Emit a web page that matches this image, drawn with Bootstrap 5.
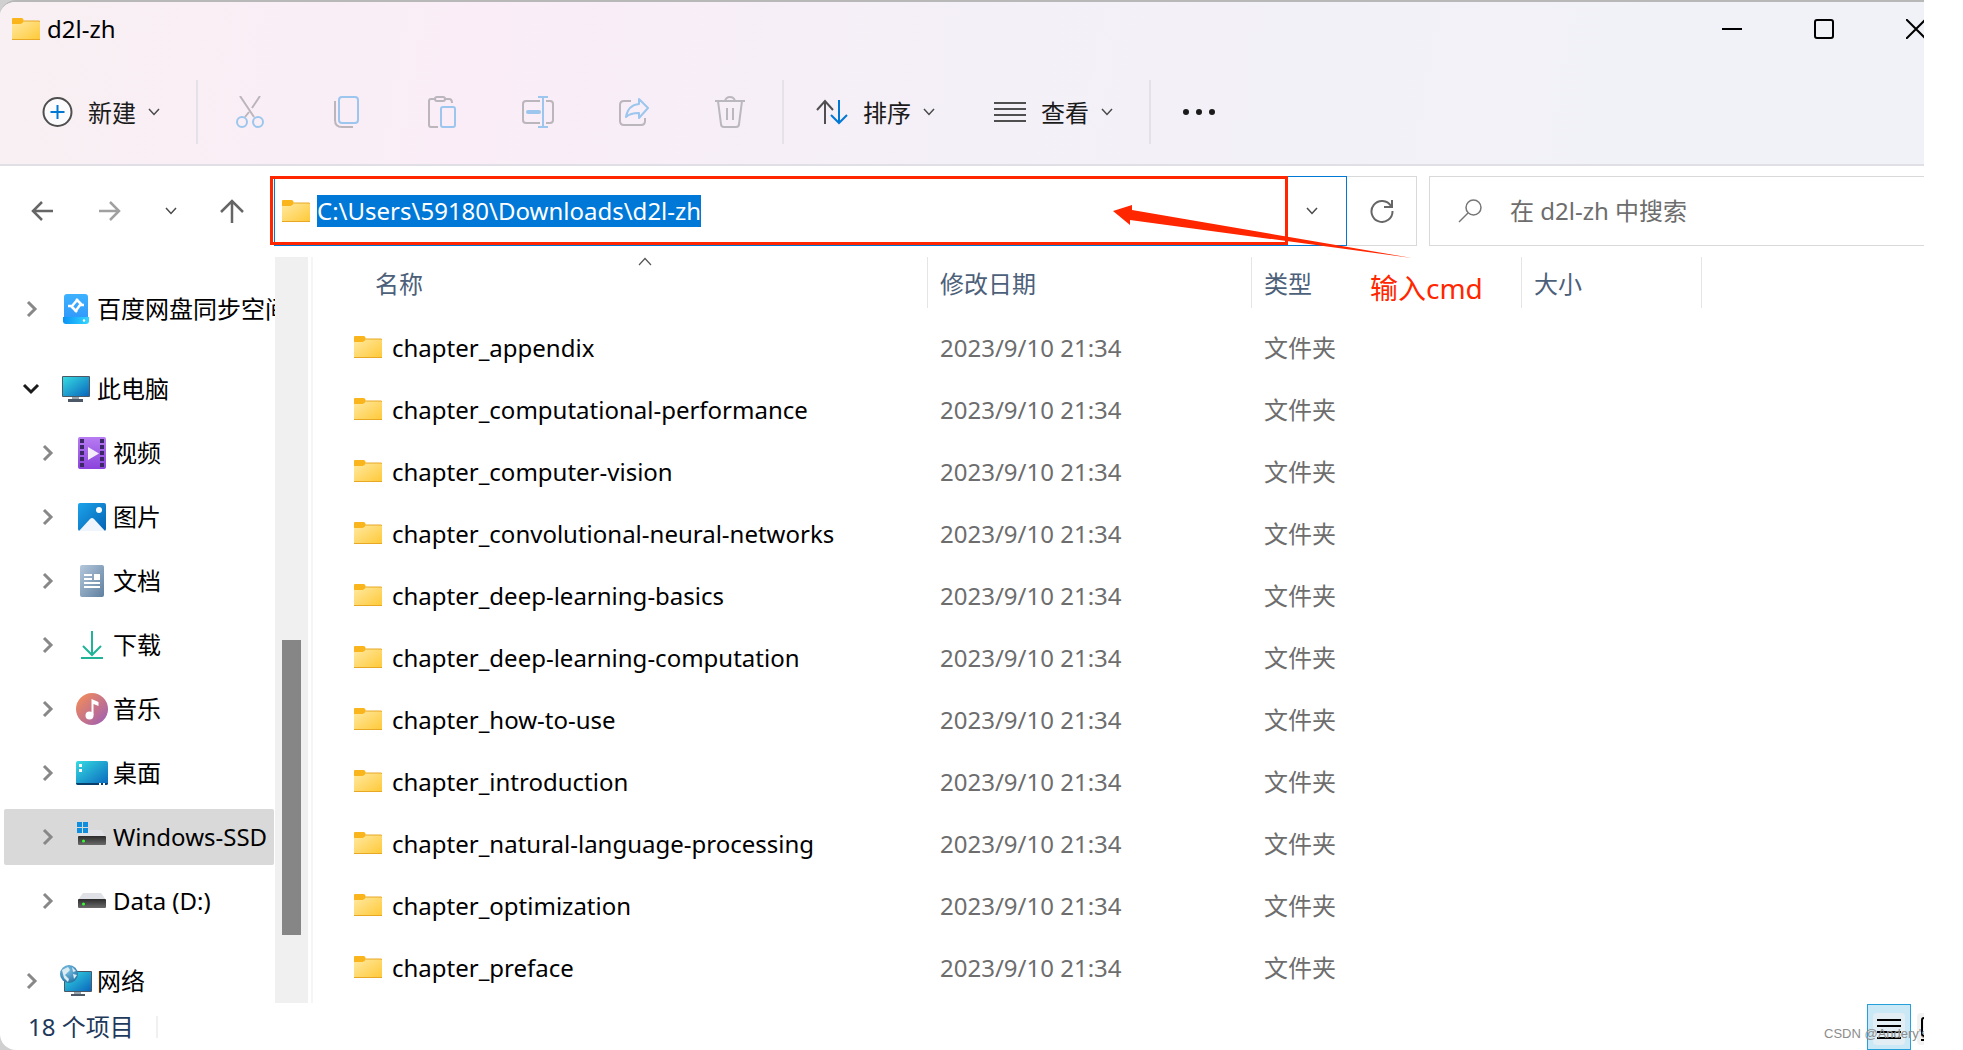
<!DOCTYPE html>
<html lang="zh-CN">
<head>
<meta charset="utf-8">
<meta name="viewport" content="width=device-width, initial-scale=1">
<title>d2l-zh</title>
<link href="https://cdn.jsdelivr.net/npm/bootstrap@5.3.0/dist/css/bootstrap.min.css" rel="stylesheet">
<style>
  body { font-family: "Noto Sans", "Noto Sans CJK SC", sans-serif; font-size: 24px; line-height: 32px; color: #000; background: #fff; padding-right: 39px; }
  .shell { background: #d0d0d0; height: 100vh; }
  .explorer { border-top: 2px solid #b8b8b8; border-radius: 16px 0 0 16px; background: #fff; height: 100%; }
  .chrome-head { background: linear-gradient(100deg, #f8f0f3 0%, #faedf7 25%, #f4f0f7 50%, #f1f2f8 85%); border-bottom: 2px solid #e0dfe5; }
  .titlebar { height: 54px; padding-left: 12px; gap: 7px; }
  .caption-set { margin-right: -38px; }
  .caption-set .btn { width: 92px; }
  .toolbar { height: 108px; padding: 4px 0 0 42px; color: #1b1b1b; }
  .btn { border: 0; border-radius: 0; padding: 0; display: inline-flex; align-items: center; justify-content: center; font-size: 24px; line-height: 32px; color: inherit; }
  .menu-btn { gap: 12px; }
  .menu-btn > span { margin-left: 3px; padding-top: 2px; }
  .tool-btn { width: 96px; height: 64px; }
  .rule-v { width: 2px; height: 64px; background: #e5e1e9; }
  .rule-v.after-menu { margin-left: 36px; }
  .rule-v.before-menu { margin-right: 32px; }
  .view-menu { margin-left: 59px; }
  .navrow { padding-top: 10px; height: 91px; }
  .nav-set { padding: 0 8px; width: 274px; }
  .nav-set .btn { flex: 1 1 0; height: 70px; }
  .nav-set .btn.narrow { flex: 0 0 54px; }
  .address { flex: 1064 1 0; height: 70px; border: 1px solid #0078d4; padding-left: 7px; gap: 7px; }
  .address input, .finder input { border: 0; outline: 0; background: transparent; min-width: 0; padding: 0; color: #000; }
  .address input::selection { background: #0078d7; color: #fff; }
  .drop-btn { width: 68px; }
  .refresh { width: 70px; height: 70px; border: 1px solid #d9d9d9; border-left: 0; }
  .finder { flex: 466 1 0; height: 70px; border: 1px solid #d9d9d9; border-right: 0; margin-left: 12px; padding-left: 28px; gap: 28px; }
  .finder input::placeholder { color: #6d6d6d; opacity: 1; }
  .frame-note { position: absolute; left: -5px; right: 58px; top: -1px; bottom: 0; border: 3px solid #ff2600; pointer-events: none; }
  .arrow-note { position: absolute; right: -66px; top: 28px; pointer-events: none; z-index: 2; }
  .text-note { position: absolute; left: 100%; top: 91px; margin-left: 24px; color: #ff2600; font-size: 28px; line-height: 40px; white-space: nowrap; }
  .mid { min-height: 0; height: 746px; }
  .tree { width: 275px; padding: 20px 0 0; margin: 0; }
  .tree a { height: 64px; padding-left: 22px; color: #000; text-decoration: none; white-space: nowrap; }
  .tree .sub a { padding-left: 38px; }
  .tree .gap-above { margin-top: 16px; }
  .tree .ico { width: 36px; margin: 0 4px 0 15px; flex: none; }
  .tree .chev { width: 20px; flex: none; }
  .tree .sub .picked { background: #d9d9d9; height: 56px; margin: 4px 1px 4px 4px; padding-left: 34px; border-radius: 2px; }
  .track { width: 33px; background: #f0f0f0; padding: 383px 7px 68px; margin-right: 3px; }
  .thumb { background: #868686; height: 100%; }
  .pane { border-left: 2px solid #f5f5f5; min-width: 0; }
  .files { table-layout: fixed; width: 100%; border-collapse: collapse; }
  .files th { font-weight: 400; padding: 0 0 9px; color: #4c607a; }
  .files th > div { height: 51px; border-right: 1px solid #e5e5e5; padding: 2px 0 0 12px; }
  .files th.first > div { padding-left: 62px; }
  .files tbody td { height: 62px; padding: 0 0 0 12px; color: #6d6d6d; white-space: nowrap; }
  .files tbody td.first { padding-left: 41px; color: #000; }
  .files td.first svg { margin-right: 10px; margin-top: -8px; }
  .sort-mark { position: absolute; left: 53%; top: 0; }
  .status { height: 47px; padding-left: 28px; color: #1e395b; }
  .status .tick { width: 2px; height: 22px; background: #f0f0f0; margin-left: 22px; }
  .view-btn { width: 44px; height: 46px; padding-top: 4px; border: 1px solid #26a0da; background: #cbe8f6; }
  .view-btn.more { width: 13px; border: 0; background: transparent; }
  .stamp { position: absolute; right: 0; bottom: 5px; width: 100px; overflow: hidden; white-space: nowrap; font-family: "Liberation Sans", sans-serif; font-size: 13px; line-height: 22px; color: #8c8c8c; }
</style>
</head>
<body>
<svg width="0" height="0" class="position-absolute" aria-hidden="true">
  <defs>
    <linearGradient id="gFold" x1="0" y1="0" x2="1" y2="1"><stop offset="0" stop-color="#ffe9a2"/><stop offset="1" stop-color="#ffc937"/></linearGradient>
    <linearGradient id="gScr" x1="0" y1="0" x2="1" y2="1"><stop offset="0" stop-color="#35dbe2"/><stop offset="1" stop-color="#0a66bd"/></linearGradient>
    <linearGradient id="gVid" x1="0" y1="0" x2="0" y2="1"><stop offset="0" stop-color="#b77cf2"/><stop offset="1" stop-color="#8a43dc"/></linearGradient>
    <linearGradient id="gPic" x1="0" y1="0" x2="1" y2="1"><stop offset="0" stop-color="#1ca3ea"/><stop offset="1" stop-color="#0562b3"/></linearGradient>
    <linearGradient id="gDoc" x1="0" y1="0" x2="1" y2="1"><stop offset="0" stop-color="#b4c8dc"/><stop offset="1" stop-color="#5f7f9f"/></linearGradient>
    <linearGradient id="gMus" x1="0" y1="0" x2="1" y2="1"><stop offset=".1" stop-color="#f08a5c"/><stop offset="1" stop-color="#9a5cb8"/></linearGradient>
    <linearGradient id="gBd" x1="0" y1="0" x2="0" y2="1"><stop offset="0" stop-color="#3db2ff"/><stop offset="1" stop-color="#2f95fb"/></linearGradient>
    <linearGradient id="gBd2" x1="0" y1="0" x2="1" y2="0"><stop offset="0" stop-color="#0a93f5"/><stop offset="1" stop-color="#35d6ff"/></linearGradient>
    <linearGradient id="gDrv" x1="0" y1="0" x2="0" y2="1"><stop offset="0" stop-color="#2c2c2c"/><stop offset="1" stop-color="#6a6a6a"/></linearGradient>
    <radialGradient id="gGlobe" cx=".4" cy=".3" r=".8"><stop offset="0" stop-color="#7cc4ea"/><stop offset="1" stop-color="#1d6a9c"/></radialGradient>
    <symbol id="folder" viewBox="0 0 28 22"><path d="M0 1q0-1 1-1h9q1 0 2 3v3H0z" fill="#f9b51b"/><path d="M0 6h8.500q2 0 3.500-3h16v19H1q-1 0-1-1z" fill="url(#gFold)"/><path d="M12 3h15q1 0 1 1M0 21.500h28" stroke="#e8a824" fill="none"/></symbol>
    <symbol id="down" viewBox="0 0 12 8"><path d="M1 1l5 5.500L11 1" fill="none" stroke="#4a4a4a" stroke-width="1.500"/></symbol>
    <symbol id="right" viewBox="0 0 12 18"><path d="M2 2l7 7-7 7" fill="none" stroke="#888" stroke-width="3"/></symbol>
    <symbol id="drive" viewBox="0 0 28 16"><path d="M5 0h18l5 7H0z" fill="#dfe1e6"/><rect y="6" width="28" height="9" rx="1" fill="url(#gDrv)"/><circle cx="5.500" cy="11" r="1.500" fill="#3f3"/></symbol>
  </defs>
</svg>

<div class="shell">
<main class="explorer d-flex flex-column position-relative overflow-hidden">
  <header class="chrome-head">
    <div class="titlebar d-flex align-items-center overflow-hidden">
      <svg width="28" height="22"><use href="#folder"/></svg>
      <span class="me-auto">d2l-zh</span>
      <div class="caption-set d-flex align-self-stretch flex-shrink-0">
        <button type="button" class="btn" aria-label="最小化"><svg width="20" height="20"><path d="M0 10h20" stroke="#000" stroke-width="2"/></svg></button>
        <button type="button" class="btn" aria-label="最大化"><svg width="20" height="20"><rect x="1" y="1" width="18" height="18" rx="2" fill="none" stroke="#000" stroke-width="2"/></svg></button>
        <button type="button" class="btn" aria-label="关闭"><svg width="20" height="20"><path d="M0 0l20 20M20 0L0 20" stroke="#000" stroke-width="2"/></svg></button>
      </div>
    </div>
    <div class="toolbar d-flex align-items-center">
      <button type="button" class="btn menu-btn">
        <svg width="31" height="30" fill="none"><circle cx="15.500" cy="15" r="14" fill="#fbfafc" stroke="#4f4f4f" stroke-width="2"/><path d="M8.500 15h14M15.500 8v14" stroke="#0078d4" stroke-width="2"/></svg>
        <span>新建</span><svg width="12" height="8"><use href="#down"/></svg></button>
      <div class="rule-v after-menu me-1"></div>
      <button type="button" class="btn tool-btn" aria-label="剪切"><svg width="28" height="32" fill="none" stroke-width="2"><path d="M4 0l14 21M24 0l-8 12M13 16l-4 5" stroke="#bbb5bc"/><circle cx="6" cy="26" r="5" stroke="#9cc6ee"/><circle cx="22" cy="26" r="5" stroke="#9cc6ee"/></svg></button>
      <button type="button" class="btn tool-btn" aria-label="复制"><svg width="25" height="32" fill="none" stroke-width="2"><path d="M1 5v19q0 7 7 7h11" stroke="#bbb5bc"/><rect x="5" y="1" width="19" height="26" rx="3" stroke="#9cc6ee"/></svg></button>
      <button type="button" class="btn tool-btn" aria-label="粘贴"><svg width="28" height="32" fill="none" stroke-width="2"><path d="M7 3H3q-2 0-2 2v24q0 2 2 2h7M17 3h4q3 0 3 4" stroke="#bbb5bc"/><rect x="7" y="1" width="10" height="4" rx="2" stroke="#bbb5bc"/><rect x="13" y="11" width="14" height="20" rx="2" stroke="#9cc6ee"/></svg></button>
      <button type="button" class="btn tool-btn" aria-label="重命名"><svg width="32" height="32" fill="none" stroke-width="2"><path d="M18 5H4Q1 5 1 8v16q0 3 3 3h14M24 5h4q3 0 3 3v16q0 3-3 3h-4" stroke="#bbb5bc"/><path d="M16 1h10M16 31h10M21 1v30" stroke="#9cc6ee"/><path d="M6 16h11" stroke="#9cc6ee" stroke-width="4" stroke-linecap="round"/></svg></button>
      <button type="button" class="btn tool-btn" aria-label="共享"><svg width="30" height="30" fill="none" stroke-width="2"><path d="M12 4H5Q1 4 1 8v16q0 4 4 4h17q4 0 4-4v-3" stroke="#bbb5bc"/><path d="M20 2l9 9-9 10v-5q-9 0-13 4Q9 8 20 7z" stroke="#9cc6ee" stroke-linejoin="round"/></svg></button>
      <button type="button" class="btn tool-btn" aria-label="删除"><svg width="30" height="32" fill="none" stroke="#bbb7be" stroke-width="2"><path d="M0 5h30M3 5l3 23q0 3 3 3h12q3 0 3-3l3-23M10 5q1-4 5-4t5 4M12 12v12M18 12v12"/></svg></button>
      <div class="rule-v before-menu ms-1"></div>
      <button type="button" class="btn menu-btn">
        <svg width="32" height="26" fill="none" stroke-width="2"><path d="M9 25V2M1 11l8-9 8 9" stroke="#4f4f4f"/><path d="M23 1v23M15 16l8 8 8-8" stroke="#0078d4"/></svg>
        <span>排序</span><svg width="12" height="8"><use href="#down"/></svg></button>
      <button type="button" class="btn menu-btn view-menu">
        <svg width="32" height="22" fill="none" stroke="#4f4f4f" stroke-width="2"><path d="M0 2h32M0 8h32M0 14h32M0 20h32"/></svg>
        <span>查看</span><svg width="12" height="8"><use href="#down"/></svg></button>
      <div class="rule-v after-menu before-menu"></div>
      <button type="button" class="btn" aria-label="更多"><svg width="32" height="8" fill="#1b1b1b"><circle cx="3" cy="4" r="3"/><circle cx="16" cy="4" r="3"/><circle cx="29" cy="4" r="3"/></svg></button>
    </div>
  </header>

  <div class="navrow d-flex align-items-start">
    <nav class="nav-set d-flex flex-shrink-0">
      <button type="button" class="btn" aria-label="后退"><svg width="22" height="20" fill="none" stroke="#666" stroke-width="2.500"><path d="M22 10H2M11 1l-9 9 9 9"/></svg></button>
      <button type="button" class="btn" aria-label="前进"><svg width="22" height="20" fill="none" stroke="#a0a0a0" stroke-width="2.500"><path d="M0 10h20M11 1l9 9-9 9"/></svg></button>
      <button type="button" class="btn narrow" aria-label="最近浏览"><svg width="12" height="8"><use href="#down"/></svg></button>
      <button type="button" class="btn" aria-label="上移"><svg width="24" height="24" fill="none" stroke="#666" stroke-width="2.500"><path d="M12 24V2M1 13L12 2l11 11"/></svg></button>
    </nav>
    <div class="address d-flex align-items-center position-relative">
      <svg width="28" height="22" class="flex-shrink-0"><use href="#folder"/></svg>
      <input id="path" class="flex-grow-1" type="text" value="C:\Users\59180\Downloads\d2l-zh" aria-label="地址" spellcheck="false" autofocus>
      <button type="button" class="btn drop-btn align-self-stretch" aria-label="以前的位置"><svg width="12" height="8"><use href="#down"/></svg></button>
      <div class="frame-note"></div>
      <svg class="arrow-note" width="299" height="56"><path d="M0 6L19 0v5L299 53 17 15v5z" fill="#ff2600"/></svg>
      <div class="text-note">输入cmd</div>
    </div>
    <button type="button" class="btn refresh" aria-label="刷新"><svg width="24" height="24" fill="none" stroke="#666" stroke-width="2"><path d="M21 7A10.500 10.500 0 1 0 22.500 12M22 1v7h-8"/></svg></button>
    <label class="finder d-flex align-items-center">
      <svg width="24" height="24" fill="none" stroke="#777" stroke-width="1.500"><circle cx="15.500" cy="8.500" r="7.500"/><path d="M10 14L1 23"/></svg>
      <input type="search" class="flex-grow-1" placeholder="在 d2l-zh 中搜索" aria-label="搜索">
    </label>
  </div>

  <div class="mid d-flex">
    <ul class="tree list-unstyled overflow-hidden flex-shrink-0">
      <li><a href="#" class="d-flex align-items-center"><svg class="chev" height="18"><use href="#right"/></svg>
        <svg class="ico" height="32"><rect x="7" y="1" width="24" height="28" rx="3" fill="url(#gBd)"/><path d="M6 24h26v4q0 3-3 3H9q-3 0-3-3z" fill="url(#gBd2)"/><circle cx="27" cy="27.500" r="1.200" fill="#fff"/><path d="M11 13h4l6-7M19 6l6 6M14 13l6 6M27 12h-4l-5 7" fill="none" stroke="#fff" stroke-width="2.500"/></svg>百度网盘同步空间</a></li>
      <li class="gap-above"><a href="#" class="d-flex align-items-center"><svg class="chev" height="12"><path d="M2 2l7 7 7-7" fill="none" stroke="#1b1b1b" stroke-width="3"/></svg>
        <svg class="ico" height="28"><path d="M15 20h7v4h-7z" fill="#9aa4ad"/><path d="M11 24h15v3H11z" fill="#4c5866"/><rect x="5" y="1" width="28" height="21" rx="1" fill="#4b5967"/><rect x="6" y="2" width="26" height="19" fill="url(#gScr)"/></svg>此电脑</a></li>
      <li class="sub"><a href="#" class="d-flex align-items-center"><svg class="chev" height="18"><use href="#right"/></svg>
        <svg class="ico" height="32"><rect x="5" width="28" height="32" rx="2" fill="url(#gVid)"/><path d="M9 2v28M29 2v28" stroke="#3c2767" stroke-width="4" stroke-dasharray="4 2"/><path d="M15 10v13l11-6.500z" fill="#f3eefa"/></svg>视频</a></li>
      <li class="sub"><a href="#" class="d-flex align-items-center"><svg class="chev" height="18"><use href="#right"/></svg>
        <svg class="ico" height="28"><rect x="5" width="28" height="28" rx="2" fill="url(#gPic)"/><path d="M6 28l11-12q2-2 4 0l11 12z" fill="#eef5fc"/><circle cx="26" cy="7" r="3" fill="#fff"/></svg>图片</a></li>
      <li class="sub"><a href="#" class="d-flex align-items-center"><svg class="chev" height="18"><use href="#right"/></svg>
        <svg class="ico" height="32"><rect x="7" width="24" height="32" rx="2" fill="url(#gDoc)"/><path d="M11 10h8M11 14h8M11 18h16M11 22h16" stroke="#fff" stroke-width="2"/><rect x="21" y="9" width="6" height="6" fill="#fff"/></svg>文档</a></li>
      <li class="sub"><a href="#" class="d-flex align-items-center"><svg class="chev" height="18"><use href="#right"/></svg>
        <svg class="ico" height="28" fill="none" stroke="#1fb497" stroke-width="2"><path d="M19 0v24M10 15l9 9 9-9M8 27h22"/></svg>下载</a></li>
      <li class="sub"><a href="#" class="d-flex align-items-center"><svg class="chev" height="18"><use href="#right"/></svg>
        <svg class="ico" height="32"><circle cx="19" cy="16" r="16" fill="url(#gMus)"/><circle cx="16.500" cy="22.500" r="4" fill="#fff"/><path d="M18.500 22V6l7 3v4l-5-2v11z" fill="#fff"/></svg>音乐</a></li>
      <li class="sub"><a href="#" class="d-flex align-items-center"><svg class="chev" height="18"><use href="#right"/></svg>
        <svg class="ico" height="24"><rect x="3" width="32" height="24" rx="2" fill="url(#gScr)"/><path d="M3 22h32q0 2-2 2H5q-2 0-2-2z" fill="#0b3f6b"/><path d="M6 3h3v3H6zM6 8h3v3H6zM26 22h2v2h-2zM30 22h2v2h-2z" fill="#fff"/></svg>桌面</a></li>
      <li class="sub"><a href="#" class="picked d-flex align-items-center"><svg class="chev" height="18"><use href="#right"/></svg>
        <svg class="ico" height="32"><use href="#drive" x="5" y="9" width="28" height="16"/><path d="M4 1h5v5H4zM10 1h5v5h-5zM4 7h5v5H4zM10 7h5v5h-5z" fill="#0f8ee0"/></svg>Windows-SSD</a></li>
      <li class="sub"><a href="#" class="d-flex align-items-center"><svg class="chev" height="18"><use href="#right"/></svg>
        <svg class="ico" height="16"><use href="#drive" x="5" y="0" width="28" height="16"/></svg>Data (D:)</a></li>
      <li class="gap-above"><a href="#" class="d-flex align-items-center"><svg class="chev" height="18"><use href="#right"/></svg>
        <svg class="ico" height="34"><path d="M17 26h7v4h-7z" fill="#9aa4ad"/><path d="M14 30h14v2H14z" fill="#4c5866"/><rect x="7" y="7" width="28" height="21" rx="1" fill="#4b5967"/><rect x="8" y="8" width="26" height="19" fill="url(#gScr)"/><circle cx="12" cy="10" r="9" fill="url(#gGlobe)"/><path d="M5 6l6-3 2 3-5 5 4 4-1 3-4-4zM15 3l4 4-3 1zM16 10l4 1-3 4z" fill="#dcebf0"/></svg>网络</a></li>
    </ul>
    <div class="track flex-shrink-0"><div class="thumb"></div></div>
    <section class="pane flex-grow-1 overflow-hidden">
      <table class="files">
        <colgroup><col style="width:615px"><col style="width:324px"><col style="width:270px"><col style="width:180px"><col></colgroup>
        <thead><tr>
          <th class="first" scope="col"><div class="d-flex align-items-center position-relative">名称<svg class="sort-mark" width="14" height="9"><path d="M1 8l6-6.500L13 8" fill="none" stroke="#555" stroke-width="1.200"/></svg></div></th>
          <th scope="col"><div class="d-flex align-items-center">修改日期</div></th>
          <th scope="col"><div class="d-flex align-items-center">类型</div></th>
          <th scope="col"><div class="d-flex align-items-center">大小</div></th>
          <td></td>
        </tr></thead>
        <tbody id="rows"></tbody>
      </table>
    </section>
  </div>

  <footer class="status d-flex align-items-center">
    <span>18 个项目</span><span class="tick me-auto"></span>
    <button type="button" class="btn view-btn" aria-label="详细信息"><svg width="32" height="32"><rect width="32" height="32" rx="4" fill="#e3edf4"/><path d="M4 7h24M4 13h24M4 19h24M4 25h24" stroke="#000" stroke-width="2"/></svg></button>
    <button type="button" class="btn view-btn more overflow-hidden" aria-label="大图标"><svg class="ms-auto flex-shrink-0" width="7" height="32"><rect width="20" height="32" rx="4" fill="#f2f2f2"/><rect x="5" y="5" width="18" height="18" rx="2" fill="none" stroke="#000" stroke-width="2"/><path d="M4 27h10" stroke="#000" stroke-width="2"/></svg></button>
    <div class="stamp">CSDN @Andery's</div>
  </footer>
</main>
</div>
<script src="https://cdn.jsdelivr.net/npm/bootstrap@5.3.0/dist/js/bootstrap.bundle.min.js"></script>
<script>
  const names = ['appendix', 'computational-performance', 'computer-vision', 'convolutional-neural-networks', 'deep-learning-basics', 'deep-learning-computation', 'how-to-use', 'introduction', 'natural-language-processing', 'optimization', 'preface'];
  document.getElementById('rows').innerHTML = names.map(n =>
    `<tr><td class="first"><svg width="28" height="22"><use href="#folder"/></svg>chapter_${n}</td><td>2023/9/10 21:34</td><td>文件夹</td><td></td><td></td></tr>`).join('');
  const path = document.getElementById('path');
  path.focus();
  path.select();
</script>
</body>
</html>
